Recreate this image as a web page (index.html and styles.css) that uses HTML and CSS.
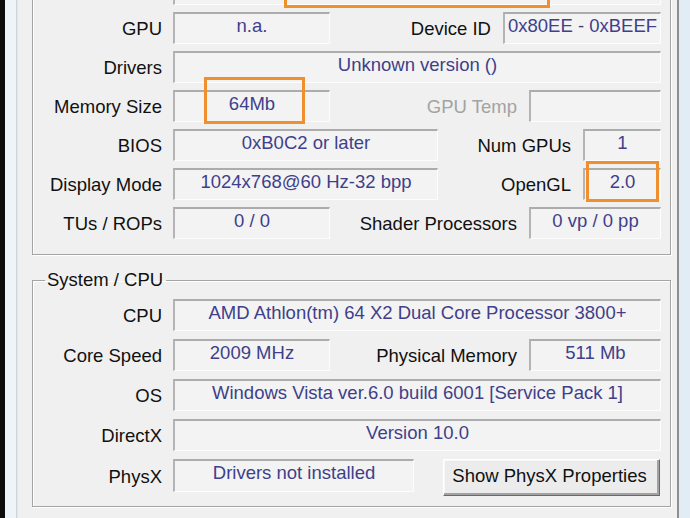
FILE: index.html
```html
<!DOCTYPE html>
<html>
<head>
<meta charset="utf-8">
<link rel="stylesheet" href="styles.css">
</head>
<body>
<div class="window">
  <div class="frame-l"></div>
  <div class="content">
    <div class="group gpu-group">
      <div class="row">
        <div class="lbl"></div>
        <div class="field w-full"><span class="mark mark-top"></span></div>
      </div>
      <div class="row">
        <div class="lbl">GPU</div>
        <div class="field w-157">n.a.</div>
        <div class="lbl2">Device ID</div>
        <div class="field w-158">0x80EE - 0xBEEF</div>
      </div>
      <div class="row">
        <div class="lbl">Drivers</div>
        <div class="field w-full">Unknown version ()</div>
      </div>
      <div class="row">
        <div class="lbl">Memory Size</div>
        <div class="field w-157">64Mb<span class="mark mark-mem"></span></div>
        <div class="lbl2 disabled">GPU Temp</div>
        <div class="field w-132"></div>
      </div>
      <div class="row">
        <div class="lbl">BIOS</div>
        <div class="field w-265">0xB0C2 or later</div>
        <div class="lbl2">Num GPUs</div>
        <div class="field w-78">1</div>
      </div>
      <div class="row">
        <div class="lbl">Display Mode</div>
        <div class="field w-265">1024x768@60 Hz-32 bpp</div>
        <div class="lbl2">OpenGL</div>
        <div class="field w-78">2.0<span class="mark mark-gl"></span></div>
      </div>
      <div class="row">
        <div class="lbl">TUs / ROPs</div>
        <div class="field w-157">0 / 0</div>
        <div class="lbl2">Shader Processors</div>
        <div class="field w-132">0 vp / 0 pp</div>
      </div>
    </div>

    <fieldset class="group cpu-group">
      <legend>System / CPU</legend>
      <div class="row">
        <div class="lbl">CPU</div>
        <div class="field w-full">AMD Athlon(tm) 64 X2 Dual Core Processor 3800+</div>
      </div>
      <div class="row">
        <div class="lbl">Core Speed</div>
        <div class="field w-157">2009 MHz</div>
        <div class="lbl2">Physical Memory</div>
        <div class="field w-132">511 Mb</div>
      </div>
      <div class="row">
        <div class="lbl">OS</div>
        <div class="field w-full">Windows Vista ver.6.0 build 6001 [Service Pack 1]</div>
      </div>
      <div class="row">
        <div class="lbl">DirectX</div>
        <div class="field w-full">Version 10.0</div>
      </div>
      <div class="row row-physx">
        <div class="lbl">PhysX</div>
        <div class="field w-241">Drivers not installed</div>
        <button class="btn">Show PhysX Properties</button>
      </div>
    </fieldset>
  </div>
  <div class="frame-r"></div>
</div>
</body>
</html>
```

FILE: styles.css
```css
html, body {
  margin: 0;
  padding: 0;
  height: 518px;
  overflow: hidden;
  background: #f0f0f0;
  font-family: "Liberation Sans", Arial, sans-serif;
  font-size: 18.5px;
}

.window {
  display: flex;
  height: 518px;
}

.frame-l {
  width: 11px;
  border-left: 5px solid #0c0c0c;
  border-right: 1px solid #cdd5dc;
  background: #eef4f9;
  flex: none;
}

.frame-r {
  width: 12px;
  border-left: 2px solid #8e8e8e;
  background: #e2ecf4;
  flex: none;
}

.content {
  flex: 1;
  padding: 0 6px 0 14px;
  border-left: 1px solid #e6e6e6;
}

.group {
  border: 1px solid #a4a4a4;
  box-shadow: 1px 1px 0 #ffffff, inset 1px 1px 0 #ffffff;
  display: flex;
  flex-direction: column;
  gap: 7px;
  padding: 14px 9px 15px 0;
}

.gpu-group {
  margin-top: -42px;
}

.cpu-group {
  margin: 14px 0 0 0;
  padding: 8px 9px 10px 0;
  gap: 8px;
  min-inline-size: 0;
}

.cpu-group legend {
  margin-left: 12px;
  padding: 0 3px 0 2px;
  line-height: 22px;
  color: #111;
}

.row {
  display: flex;
  align-items: center;
  height: 32px;
}

.row-physx {
  align-items: flex-start;
  height: 37px;
}

.lbl {
  width: 129px;
  margin-right: 11px;
  text-align: right;
  color: #111;
  white-space: nowrap;
  flex: none;
  padding-top: 1px;
}

.row-physx .lbl {
  line-height: 33px;
}

.lbl2 {
  flex: 1;
  text-align: right;
  margin-right: 12px;
  color: #111;
  white-space: nowrap;
  padding-top: 1px;
}

.lbl2.disabled {
  color: #a3a3a3;
}

.field {
  position: relative;
  box-sizing: border-box;
  height: 32px;
  padding-bottom: 6px;
  display: flex;
  align-items: center;
  justify-content: center;
  background: #f3f3f3;
  border-top: 2px solid #acacac;
  border-left: 2px solid #b4b4b4;
  border-right: 1px solid #fdfdfd;
  border-bottom: 1px solid #fdfdfd;
  color: #3f3f8a;
  white-space: nowrap;
  flex: none;
}

.w-full { width: 488px; }
.w-157 { width: 157px; }
.w-158 { width: 158px; }
.w-132 { width: 132px; }
.w-265 { width: 265px; }
.w-78 { width: 78px; }
.w-241 { width: 241px; height: 33px; }

.btn {
  margin-left: 29px;
  width: 217px;
  height: 37px;
  box-sizing: border-box;
  font: inherit;
  color: #111;
  background: #ececec;
  border: 1px solid;
  border-color: #ffffff #6a6a6a #6a6a6a #ffffff;
  box-shadow: inset -2px -2px 0 #a2a2a2, inset 1px 1px 0 #f8f8f8;
  padding: 0 4px 3px 0;
  white-space: nowrap;
}

.mark {
  position: absolute;
  box-sizing: border-box;
  border: 3px solid #ef8f2e;
  z-index: 2;
}

.mark-top {
  left: 109px;
  top: -20px;
  width: 266px;
  height: 53px;
}

.mark-mem {
  left: 29px;
  top: -15px;
  width: 101px;
  height: 47px;
}

.mark-gl {
  left: 1px;
  top: -9px;
  width: 73px;
  height: 41px;
}
```
